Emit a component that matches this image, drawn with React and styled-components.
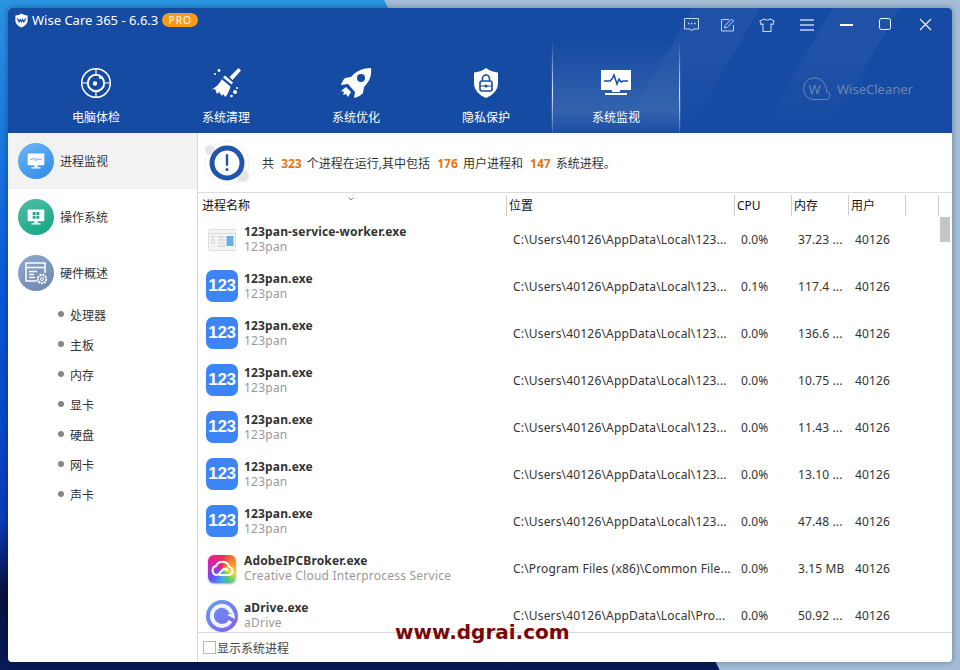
import styled, { createGlobalStyle } from "styled-components";

const sans = `"Noto Sans", "Noto Sans CJK SC", sans-serif`;
const blue = "#164ba3";

const GlobalStyle = createGlobalStyle`
  html, body {
    margin: 0;
    padding: 0;
    width: 960px;
    height: 670px;
    overflow: hidden;
  }
  * {
    box-sizing: border-box;
  }
`;

const Desktop = styled.div`
  position: relative;
  width: 960px;
  height: 670px;
  padding: 8px;
  font-family: ${sans};
  background:
    linear-gradient(63.4deg, transparent 55.5%, #a3bdd6 55.6%),
    linear-gradient(180deg, #2a94e2 0%, #0a55d8 45%, #0c3bb8 78%, #06123f 88%, #081a58 100%);
`;

const Window = styled.div`
  width: 944px;
  height: 654px;
  display: flex;
  flex-direction: column;
  border-radius: 4px;
  overflow: hidden;
  background: #fff;
  box-shadow: 0 0 6px rgba(0, 0, 0, 0.35);
`;

const Header = styled.header`
  height: 125px;
  flex-shrink: 0;
  display: flex;
  flex-direction: column;
  background:
    linear-gradient(180deg, rgba(22, 75, 163, 0) 0%, rgba(22, 75, 163, 0) 30%, ${blue} 95%),
    linear-gradient(
      120deg,
      transparent 593px,
      rgba(255, 255, 255, 0.045) 593px,
      rgba(255, 255, 255, 0.045) 651px,
      transparent 651px,
      transparent 714px,
      rgba(255, 255, 255, 0.045) 714px,
      rgba(255, 255, 255, 0.045) 772px,
      transparent 772px
    ),
    ${blue};
`;

const TitleBar = styled.div`
  height: 33px;
  display: flex;
  align-items: center;
  padding: 0 6px 9px 6px;
  color: #fff;
`;

const TitleText = styled.span`
  font-size: 13px;
  margin-left: 3px;
  white-space: nowrap;
`;

const ProBadge = styled.span`
  margin-left: 4px;
  width: 36px;
  height: 14px;
  border-radius: 7px;
  background: #f59a1c;
  color: #fff;
  font-size: 10px;
  line-height: 14px;
  text-align: center;
  letter-spacing: 1.2px;
`;

const Controls = styled.div`
  margin-left: auto;
  display: flex;
  align-items: center;
  margin-top: 9px;
`;

const ControlButton = styled.div`
  width: ${(p) => p.$w || 39}px;
  height: 20px;
  display: flex;
  align-items: center;
  justify-content: center;
  color: ${(p) => (p.$dim ? "#c6d4ea" : "#fff")};
`;

const Nav = styled.nav`
  flex: 1;
  display: flex;
  padding-left: 23px;
`;

const Tab = styled.div`
  position: relative;
  width: 130px;
  display: flex;
  flex-direction: column;
  align-items: center;
  padding-top: 26px;
  color: #fff;
  background: ${(p) =>
    p.$active
      ? "linear-gradient(180deg, rgba(255,255,255,0) 0%, rgba(255,255,255,0.13) 75%, rgba(255,255,255,0.02) 100%)"
      : "transparent"};
  ${(p) =>
    p.$active &&
    `
    &::before, &::after {
      content: "";
      position: absolute;
      top: 0;
      bottom: 0;
      width: 1px;
      background: linear-gradient(180deg, rgba(255,255,255,0) 0%, rgba(255,255,255,0.85) 55%, rgba(255,255,255,0.1) 100%);
    }
    &::before { left: 1px; }
    &::after { right: 1px; }
  `}
`;

const TabIcon = styled.div`
  height: 32px;
  display: flex;
  align-items: center;
  justify-content: center;
`;

const TabLabel = styled.span`
  margin-top: 10px;
  font-size: 12px;
  line-height: 18px;
  white-space: nowrap;
`;

const Brand = styled.div`
  margin: 36px 0 0 122px;
  height: 24px;
  display: flex;
  align-items: center;
  gap: 6px;
  color: #6f86b4;
  font-size: 13px;
`;

const Body = styled.div`
  flex: 1;
  min-height: 0;
  display: flex;
`;

const Sidebar = styled.aside`
  width: 190px;
  flex-shrink: 0;
  border-right: 1px solid #d9d9d9;
`;

const SideItem = styled.div`
  height: 56px;
  display: flex;
  align-items: center;
  padding-left: 10px;
  gap: 6px;
  background: ${(p) => (p.$active ? "#f2f2f2" : "transparent")};
  color: #333;
  font-size: 12px;
`;

const SideBadge = styled.div`
  width: 36px;
  height: 36px;
  border-radius: 50%;
  display: flex;
  align-items: center;
  justify-content: center;
  background: linear-gradient(150deg, ${(p) => p.$from}, ${(p) => p.$to});
`;

const SubList = styled.ul`
  list-style: none;
  margin: -1px 0 0;
  padding: 0 0 0 50px;
`;

const SubItem = styled.li`
  height: 30px;
  display: flex;
  align-items: center;
  gap: 6px;
  font-size: 12px;
  color: #333;
  &::before {
    content: "";
    width: 6px;
    height: 6px;
    border-radius: 50%;
    background: #858585;
    margin-bottom: 2px;
  }
`;

const Main = styled.main`
  flex: 1;
  min-width: 0;
  display: flex;
  flex-direction: column;
`;

const Banner = styled.div`
  height: 60px;
  flex-shrink: 0;
  display: flex;
  align-items: center;
  padding: 1px 0 0 6px;
  border-bottom: 1px solid #dcdcdc;
  font-size: 12px;
  color: #333;
`;

const BannerText = styled.div`
  margin-left: 12px;
  white-space: nowrap;
`;

const Count = styled.b`
  margin: 0 2px 0 4px;
  color: #e8740c;
  font-size: 12px;
  font-weight: 700;
`;

const HeadRow = styled.div`
  height: 23px;
  flex-shrink: 0;
  display: grid;
  grid-template-columns: 309px 228px 57px 57px 57px 33px;
`;

const HeadCell = styled.div`
  position: relative;
  margin-top: 2px;
  padding-left: ${(p) => p.$pad || 2}px;
  border-right: 1px solid #cfcfcf;
  font-size: 12px;
  line-height: 21px;
  color: #111;
`;

const SortArrow = styled.svg`
  position: absolute;
  left: 150px;
  top: 2px;
`;

const ListArea = styled.div`
  flex: 1;
  min-height: 0;
  display: flex;
`;

const Rows = styled.div`
  width: 740px;
  overflow: hidden;
`;

const Row = styled.div`
  height: 47px;
  display: grid;
  grid-template-columns: 308px 228px 57px 57px 57px;
  align-items: center;
  font-size: 12px;
  color: #333;
`;

const NameCell = styled.div`
  display: flex;
  align-items: center;
  padding-left: 8px;
  gap: 6px;
  min-width: 0;
`;

const NameBlock = styled.div`
  display: flex;
  flex-direction: column;
  margin-top: -2px;
  white-space: nowrap;
`;

const ProcName = styled.span`
  font-weight: 700;
  line-height: 15px;
  letter-spacing: 0.16px;
  color: #333;
`;

const ProcDesc = styled.span`
  line-height: 15px;
  letter-spacing: 0.23px;
  color: #999;
`;

const Cell = styled.div`
  padding-left: 7px;
  letter-spacing: ${(p) => p.$spacing || 0.12}px;
  white-space: nowrap;
  overflow: hidden;
`;

const IconBox = styled.div`
  width: 32px;
  height: 32px;
  flex-shrink: 0;
  display: flex;
  align-items: center;
  justify-content: center;
`;

const PanBadge = styled(IconBox)`
  margin-top: -1px;
  border-radius: 7px;
  background: #3d84f6;
  color: #fff;
  font-family: "Liberation Sans", sans-serif;
  font-size: 17px;
  font-weight: 700;
  letter-spacing: -0.3px;
`;

const AdobeBadge = styled(IconBox)`
  width: 28px;
  height: 28px;
  margin: 0 2px;
  border-radius: 6px;
  background: conic-gradient(
    #f0285a 0deg,
    #f8a01e 70deg,
    #e8de30 110deg,
    #58c878 145deg,
    #3fa8ee 180deg,
    #5a58f0 225deg,
    #b82ed0 275deg,
    #e8208c 320deg,
    #f0285a 360deg
  );
  box-shadow: 0 1px 2px rgba(0, 0, 0, 0.35);
`;

const ScrollTrack = styled.div`
  width: 14px;
  padding: 1px 2px;
`;

const ScrollThumb = styled.div`
  width: 10px;
  height: 25px;
  background: #c6c6c6;
`;

const Footer = styled.div`
  height: 30px;
  flex-shrink: 0;
  display: flex;
  align-items: center;
  padding-left: 5px;
  border-top: 1px solid #dcdcdc;
  font-size: 12px;
  color: #444;
`;

const CheckBox = styled.span`
  width: 13px;
  height: 13px;
  margin-right: 1px;
  border: 1px solid #b5b5b5;
  background: #fff;
`;

const Watermark = styled.div`
  position: absolute;
  left: 395px;
  top: 619px;
  font-family: "DejaVu Sans", sans-serif;
  font-size: 20px;
  line-height: 26px;
  font-weight: 700;
  color: #7a0606;
`;

const RadarIcon = () => (
  <svg width="32" height="32" viewBox="0 0 32 32" fill="none" stroke="#fff">
    <circle cx="16" cy="16" r="14.3" strokeWidth="1.5" />
    <circle cx="16" cy="16" r="8.2" strokeWidth="2" />
    <path d="M16 1v6M16 25v6M1 16h6M25 16h6" strokeWidth="1.2" />
    <circle cx="15" cy="16.5" r="2.2" fill="#fff" stroke="none" />
    <circle cx="20.5" cy="10.5" r="1.6" fill="#fff" stroke="none" />
  </svg>
);

const BroomIcon = () => (
  <svg width="32" height="32" viewBox="0 0 32 32" fill="#fff">
    <path d="M28.500 1l2.500 2.500-8.500 9.500-3-3z" />
    <path d="M15 8.500l8 7-1.500 2-8.500-7z" />
    <path d="M12 12.500l8.500 7c-1 4-3 7.500-5 10.500l-2.500-3-1 2-3-4-2 2-2-5-3.500.5c4-2 8-5.500 10.500-10.500z" />
    <circle cx="9" cy="3.500" r="1.400" />
    <circle cx="5" cy="7" r="1" />
    <circle cx="25" cy="25" r="2" />
    <circle cx="21.500" cy="29" r="1.300" />
    <circle cx="27" cy="21" r="1" />
  </svg>
);

const RocketIcon = () => (
  <svg width="32" height="32" viewBox="0 0 32 32">
    <path
      fill="#fff"
      d="M31 1c-8 0-15 3-20 9l-6 1c-2 2-3 4-4 7l7-1 7 8-1 6c4-1 6-2 9-5l1-6c5-5 8-11 7-19z"
    />
    <circle cx="21" cy="11" r="4" fill={blue} />
    <path fill="#fff" d="M6 20l5 5-3 5-2-3-3 1 1-3-3-1z" />
  </svg>
);

const ShieldIcon = () => (
  <svg width="32" height="32" viewBox="0 0 32 32">
    <path
      fill="#fff"
      d="M16 1c4 3 8 4 12 4.500V16c0 7-5 12-12 15C9 28 4 23 4 16V5.500C8 5 12 4 16 1z"
    />
    <rect x="10" y="14" width="12" height="10" rx="2" fill="none" stroke={blue} strokeWidth="1.600" />
    <path d="M12.500 14v-2.500a3.500 3.500 0 0 1 7 0V14" fill="none" stroke={blue} strokeWidth="1.600" />
    <path d="M10 19h12" stroke={blue} strokeWidth="1.200" />
    <circle cx="16" cy="19" r="1.600" fill={blue} />
  </svg>
);

const MonitorIcon = () => (
  <svg width="32" height="32" viewBox="0 0 32 32">
    <rect x="1" y="3" width="30" height="20" fill="#fff" />
    <path
      d="M4 14h6l2-2 2-4 3 9 2-5 2 3 2-1h5"
      fill="none"
      stroke={blue}
      strokeWidth="1.500"
    />
    <rect x="12" y="23" width="8" height="2" fill="#fff" />
    <rect x="5" y="26" width="22" height="2" fill="#fff" />
  </svg>
);

const SmallMonitor = ({ children }) => (
  <svg width="20" height="20" viewBox="0 0 24 24">
    <rect x="2" y="3" width="20" height="14" rx="1" fill="#fff" />
    <rect x="10" y="17" width="4" height="2.500" fill="#fff" />
    <rect x="6.500" y="19.500" width="11" height="1.500" fill="#fff" />
    {children}
  </svg>
);

const HardwareIcon = () => (
  <svg width="26" height="26" viewBox="0 0 26 26" fill="none" stroke="#fff">
    <path d="M14 21H3V3h19v10" strokeWidth="1.500" />
    <path d="M3 7.500h19" strokeWidth="1.500" />
    <path d="M6 11.500h8M6 14.500h5M6 17.500h6" strokeWidth="1.300" />
    <circle cx="19" cy="19" r="4.200" strokeWidth="2" strokeDasharray="2 0.800" />
    <circle cx="19" cy="19" r="1.500" strokeWidth="1" />
  </svg>
);

const InfoIcon = () => (
  <svg width="46" height="46" viewBox="0 0 46 46">
    <circle cx="23" cy="23" r="22" fill="#fff" stroke="#eef1f7" />
    <circle cx="6" cy="10" r="5" fill="#e6e6e6" />
    <circle cx="39" cy="36" r="6" fill="#e4e4e4" />
    <circle cx="23" cy="23" r="15" fill="#fff" stroke="#1f55ab" strokeWidth="5" />
    <rect x="21.800" y="14" width="2.400" height="12" rx="1.200" fill="#1f55ab" />
    <circle cx="23" cy="29.500" r="1.500" fill="#1f55ab" />
  </svg>
);

const WindowDocIcon = () => (
  <svg width="28" height="22" viewBox="0 0 28 22">
    <rect x="0.500" y="0.500" width="27" height="21" rx="1" fill="#f4f4f4" stroke="#dcdcdc" />
    <path d="M1 4.500h26" stroke="#dcdcdc" />
    <path d="M3 8h4M3 11h4M3 14h4M10 8h7M10 11h7M10 14h7M10 17h7" stroke="#c8c8c8" />
    <rect x="18.500" y="7" width="7" height="10" fill="#6aaee8" />
  </svg>
);

const AdobeCloud = () => (
  <svg width="24" height="20" viewBox="0 0 24 20" fill="none" stroke="#fff" strokeWidth="2">
    <path d="M9 16h9.500a4 4 0 0 0 .8-7.900A7 7 0 0 0 6 7a4.600 4.600 0 0 0 .5 9c2 0 3.200-1.500 4.500-3.300s2.300-3 4-3c1.500 0 2.500 1 2.500 2.300" />
  </svg>
);

const DriveIcon = () => (
  <svg width="32" height="32" viewBox="0 0 32 32">
    <defs>
      <linearGradient id="drv" x1="0" y1="0" x2="0.700" y2="1">
        <stop offset="0" stopColor="#62a0f2" />
        <stop offset="1" stopColor="#7d68f0" />
      </linearGradient>
    </defs>
    <circle cx="16" cy="16" r="16" fill="url(#drv)" />
    <path d="M24.500 21A10 10 0 1 1 25.500 13" fill="none" stroke="#f2f5ff" strokeWidth="4" />
    <path d="M21 15l7-2.500 1 6.500z" fill="#f2f5ff" />
  </svg>
);

const WiseLogo = () => (
  <svg width="28" height="24" viewBox="0 0 28 24" fill="none" stroke="#6f86b4">
    <path d="M22 8.500A11 11 0 1 0 14 22.500h9a4 4 0 0 0 3-6.500c-.6-.8-1.500-1-2.500-1 .5-2.500 0-4.500-1.500-6.500z" />
    <text x="5.500" y="17" fill="#6f86b4" stroke="none" fontSize="13" fontFamily="Noto Sans, sans-serif">
      W
    </text>
  </svg>
);

const tabs = [
  { label: "电脑体检", icon: <RadarIcon /> },
  { label: "系统清理", icon: <BroomIcon /> },
  { label: "系统优化", icon: <RocketIcon /> },
  { label: "隐私保护", icon: <ShieldIcon /> },
  { label: "系统监视", icon: <MonitorIcon />, active: true },
];

const subs = ["处理器", "主板", "内存", "显卡", "硬盘", "网卡", "声卡"];

const localPath = "C:\\Users\\40126\\AppData\\Local\\123...";

const rows = [
  { name: "123pan-service-worker.exe", desc: "123pan", path: localPath, cpu: "0.0%", mem: "37.23 ...", icon: "doc" },
  { name: "123pan.exe", desc: "123pan", path: localPath, cpu: "0.1%", mem: "117.4 ...", icon: "pan" },
  { name: "123pan.exe", desc: "123pan", path: localPath, cpu: "0.0%", mem: "136.6 ...", icon: "pan" },
  { name: "123pan.exe", desc: "123pan", path: localPath, cpu: "0.0%", mem: "10.75 ...", icon: "pan" },
  { name: "123pan.exe", desc: "123pan", path: localPath, cpu: "0.0%", mem: "11.43 ...", icon: "pan" },
  { name: "123pan.exe", desc: "123pan", path: localPath, cpu: "0.0%", mem: "13.10 ...", icon: "pan" },
  { name: "123pan.exe", desc: "123pan", path: localPath, cpu: "0.0%", mem: "47.48 ...", icon: "pan" },
  {
    name: "AdobeIPCBroker.exe",
    desc: "Creative Cloud Interprocess Service",
    path: "C:\\Program Files (x86)\\Common File...",
    cpu: "0.0%",
    mem: "3.15 MB",
    icon: "adobe",
  },
  {
    name: "aDrive.exe",
    desc: "aDrive",
    path: "C:\\Users\\40126\\AppData\\Local\\Pro...",
    cpu: "0.0%",
    mem: "50.92 ...",
    icon: "drive",
  },
];

const ProcessIcon = ({ kind }) => {
  if (kind === "pan") return <PanBadge>123</PanBadge>;
  if (kind === "doc")
    return (
      <IconBox>
        <WindowDocIcon />
      </IconBox>
    );
  if (kind === "adobe")
    return (
      <AdobeBadge>
        <AdobeCloud />
      </AdobeBadge>
    );
  return (
    <IconBox>
      <DriveIcon />
    </IconBox>
  );
};

export default function App() {
  return (
    <Desktop>
      <GlobalStyle />
      <Window>
        <Header>
          <TitleBar>
            <svg width="15" height="15" viewBox="0 0 16 16">
              <path
                fill="#fff"
                d="M8 .5c2 1.300 4 2 6.500 2.200V8c0 3.500-2.800 6-6.500 7.500C4.300 14 1.500 11.500 1.500 8V2.700C4 2.500 6 1.800 8 .5z"
              />
              <path
                d="M3.500 5.500l2 4 1.300-2.500L8 9.500 9.200 7l1.300 2.500 2-4"
                fill="none"
                stroke={blue}
                strokeWidth="1.300"
              />
            </svg>
            <TitleText>Wise Care 365 - 6.6.3</TitleText>
            <ProBadge>PRO</ProBadge>
            <Controls>
              <ControlButton $dim $w={36}>
                <svg width="15" height="14" viewBox="0 0 15 14" fill="none" stroke="currentColor">
                  <path d="M.5.5h14v10.500H9l-1.500 2L6 11H.5z" />
                  <path d="M4 5.500h1.500M7 5.500h1.500M10 5.500h1.500" strokeWidth="1.300" />
                </svg>
              </ControlButton>
              <ControlButton $dim $w={38}>
                <svg width="14" height="14" viewBox="0 0 14 14" fill="none" stroke="currentColor">
                  <path d="M12.500 7v6H.500V1.500H8" />
                  <path d="M3.500 10l.6-2.500L10.500 1l2 2L6 9.500z" />
                </svg>
              </ControlButton>
              <ControlButton $dim $w={40}>
                <svg width="16" height="14" viewBox="0 0 16 14" fill="none" stroke="currentColor">
                  <path d="M5 1C6 2.300 10 2.300 11 1l4 2-1 3.500-2-.5v7.500H4V6l-2 .5L1 3z" strokeWidth="1.100" />
                </svg>
              </ControlButton>
              <ControlButton $dim $w={40}>
                <svg width="14" height="12" viewBox="0 0 14 12" stroke="currentColor" strokeWidth="1.300">
                  <path d="M0 1h14M0 6h14M0 11h14" />
                </svg>
              </ControlButton>
              <ControlButton>
                <svg width="13" height="12" viewBox="0 0 13 12" stroke="currentColor" strokeWidth="2">
                  <path d="M0 6h13" />
                </svg>
              </ControlButton>
              <ControlButton>
                <svg width="13" height="13" viewBox="0 0 13 13" fill="none" stroke="currentColor">
                  <rect x="0.500" y="0.500" width="11" height="11" rx="2" />
                </svg>
              </ControlButton>
              <ControlButton $w={41}>
                <svg width="13" height="13" viewBox="0 0 13 13" stroke="currentColor" strokeWidth="1.100">
                  <path d="M1 1l11 11M12 1L1 12" />
                </svg>
              </ControlButton>
            </Controls>
          </TitleBar>
          <Nav>
            {tabs.map((t) => (
              <Tab key={t.label} $active={t.active}>
                <TabIcon>{t.icon}</TabIcon>
                <TabLabel>{t.label}</TabLabel>
              </Tab>
            ))}
            <Brand>
              <WiseLogo />
              WiseCleaner
            </Brand>
          </Nav>
        </Header>
        <Body>
          <Sidebar>
            <SideItem $active>
              <SideBadge $from="#6fb5f5" $to="#2e8ae6">
                <SmallMonitor>
                  <path d="M5 10h3l1.500-2 2 4 2-3 1 1H19" fill="none" stroke="#4d9ded" strokeWidth="1" />
                </SmallMonitor>
              </SideBadge>
              进程监视
            </SideItem>
            <SideItem>
              <SideBadge $from="#52bfa6" $to="#10a582">
                <SmallMonitor>
                  <path fill="#22a98b" d="M8 6h3.500v3.500H8zM12.500 6H16v3.500h-3.500zM8 10.500h3.500V14H8zM12.500 10.500H16V14h-3.500z" />
                </SmallMonitor>
              </SideBadge>
              操作系统
            </SideItem>
            <SideItem>
              <SideBadge $from="#90a9cf" $to="#6b86ae">
                <HardwareIcon />
              </SideBadge>
              硬件概述
            </SideItem>
            <SubList>
              {subs.map((s) => (
                <SubItem key={s}>{s}</SubItem>
              ))}
            </SubList>
          </Sidebar>
          <Main>
            <Banner>
              <InfoIcon />
              <BannerText>
                共 <Count>323</Count> 个进程在运行,其中包括 <Count>176</Count> 用户进程和 <Count>147</Count> 系统进程。
              </BannerText>
            </Banner>
            <HeadRow>
              <HeadCell $pad={4}>
                进程名称
                <SortArrow width="6" height="4" viewBox="0 0 6 4" fill="none" stroke="#888">
                  <path d="M.5.500L3 3 5.500.500" />
                </SortArrow>
              </HeadCell>
              <HeadCell>位置</HeadCell>
              <HeadCell>CPU</HeadCell>
              <HeadCell>内存</HeadCell>
              <HeadCell>用户</HeadCell>
              <HeadCell />
            </HeadRow>
            <ListArea>
              <Rows>
                {rows.map((r, i) => (
                  <Row key={i}>
                    <NameCell>
                      <ProcessIcon kind={r.icon} />
                      <NameBlock>
                        <ProcName>{r.name}</ProcName>
                        <ProcDesc>{r.desc}</ProcDesc>
                      </NameBlock>
                    </NameCell>
                    <Cell $spacing={0.17}>{r.path}</Cell>
                    <Cell>{r.cpu}</Cell>
                    <Cell>{r.mem}</Cell>
                    <Cell>40126</Cell>
                  </Row>
                ))}
              </Rows>
              <ScrollTrack>
                <ScrollThumb />
              </ScrollTrack>
            </ListArea>
            <Footer>
              <CheckBox />
              显示系统进程
            </Footer>
          </Main>
        </Body>
      </Window>
      <Watermark>www.dgrai.com</Watermark>
    </Desktop>
  );
}
